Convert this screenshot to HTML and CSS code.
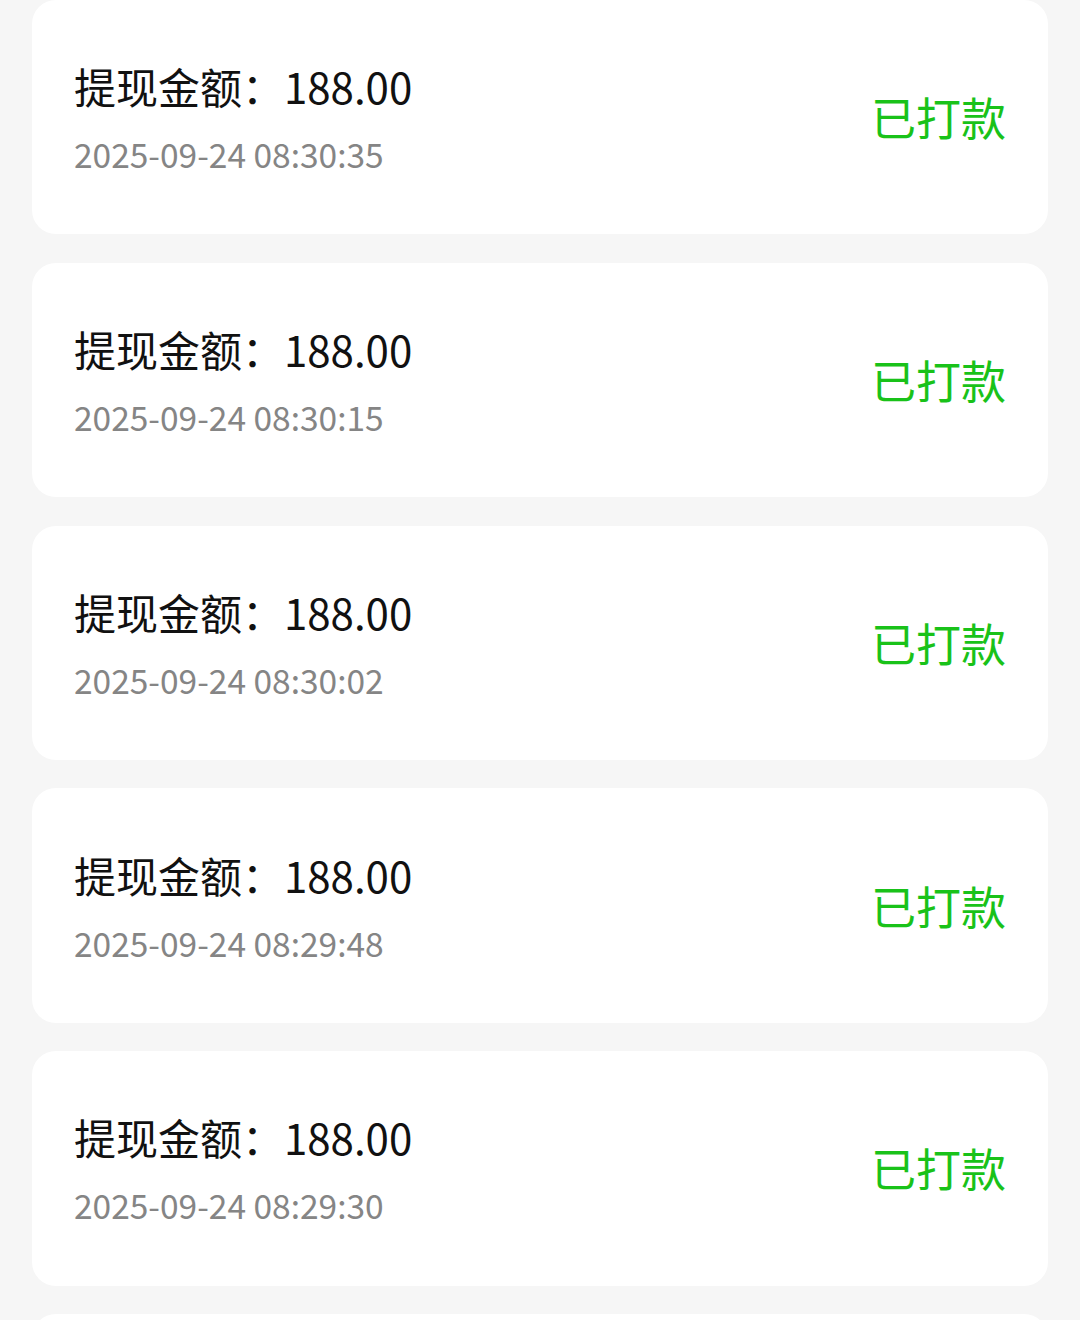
FILE: index.html
```html
<!DOCTYPE html>
<html>
    <head>
        <meta charset="utf-8">
        <meta name="viewport" content="width=device-width, initial-scale=1">
        <link rel="stylesheet" href="styles.css">
    </head>
    <body>
        <main class="lista">
            <div class="registro">
                <div class="info">
                    <div class="monto">提现金额：188.00</div>
                    <div class="fecha">2025-09-24 08:30:35</div>
                </div>
                <div class="estado">已打款</div>
            </div>
            <div class="registro">
                <div class="info">
                    <div class="monto">提现金额：188.00</div>
                    <div class="fecha">2025-09-24 08:30:15</div>
                </div>
                <div class="estado">已打款</div>
            </div>
            <div class="registro">
                <div class="info">
                    <div class="monto">提现金额：188.00</div>
                    <div class="fecha">2025-09-24 08:30:02</div>
                </div>
                <div class="estado">已打款</div>
            </div>
            <div class="registro">
                <div class="info">
                    <div class="monto">提现金额：188.00</div>
                    <div class="fecha">2025-09-24 08:29:48</div>
                </div>
                <div class="estado">已打款</div>
            </div>
            <div class="registro">
                <div class="info">
                    <div class="monto">提现金额：188.00</div>
                    <div class="fecha">2025-09-24 08:29:30</div>
                </div>
                <div class="estado">已打款</div>
            </div>
            <!-- la siguiente tarjeta queda por debajo del borde -->
            <div class="registro"></div>
        </main>
    </body>
</html>
```

FILE: styles.css
```css
            html,
            body {
                height : 100%;
                margin : 0;
                padding: 0;
            }

            body {
                background-color: #f6f6f6;
                font-family     : "Noto Sans CJK SC", "Noto Sans", sans-serif;
                overflow        : hidden;
            }

            .lista {
                display       : flex;
                flex-direction: column;
                gap           : 28.4px;
                padding       : 0 32px;
            }

            .registro {
                align-items     : center;
                background-color: #ffffff;
                border-radius   : 24px;
                box-sizing      : border-box;
                display         : flex;
                flex-shrink     : 0;
                height          : 234.4px;
                justify-content : space-between;
                padding         : 0 42px 0 42px;
            }

            .info {
                display       : flex;
                flex-direction: column;
                gap           : 16px;
            }

            .monto {
                color      : #111111;
                font-size  : 42px;
                line-height: 58px;
            }

            .fecha {
                color      : #858585;
                font-size  : 33.5px;
                line-height: 46px;
            }

            .estado {
                color      : #19c219;
                font-size  : 45px;
                line-height: 58px;
            }
```
